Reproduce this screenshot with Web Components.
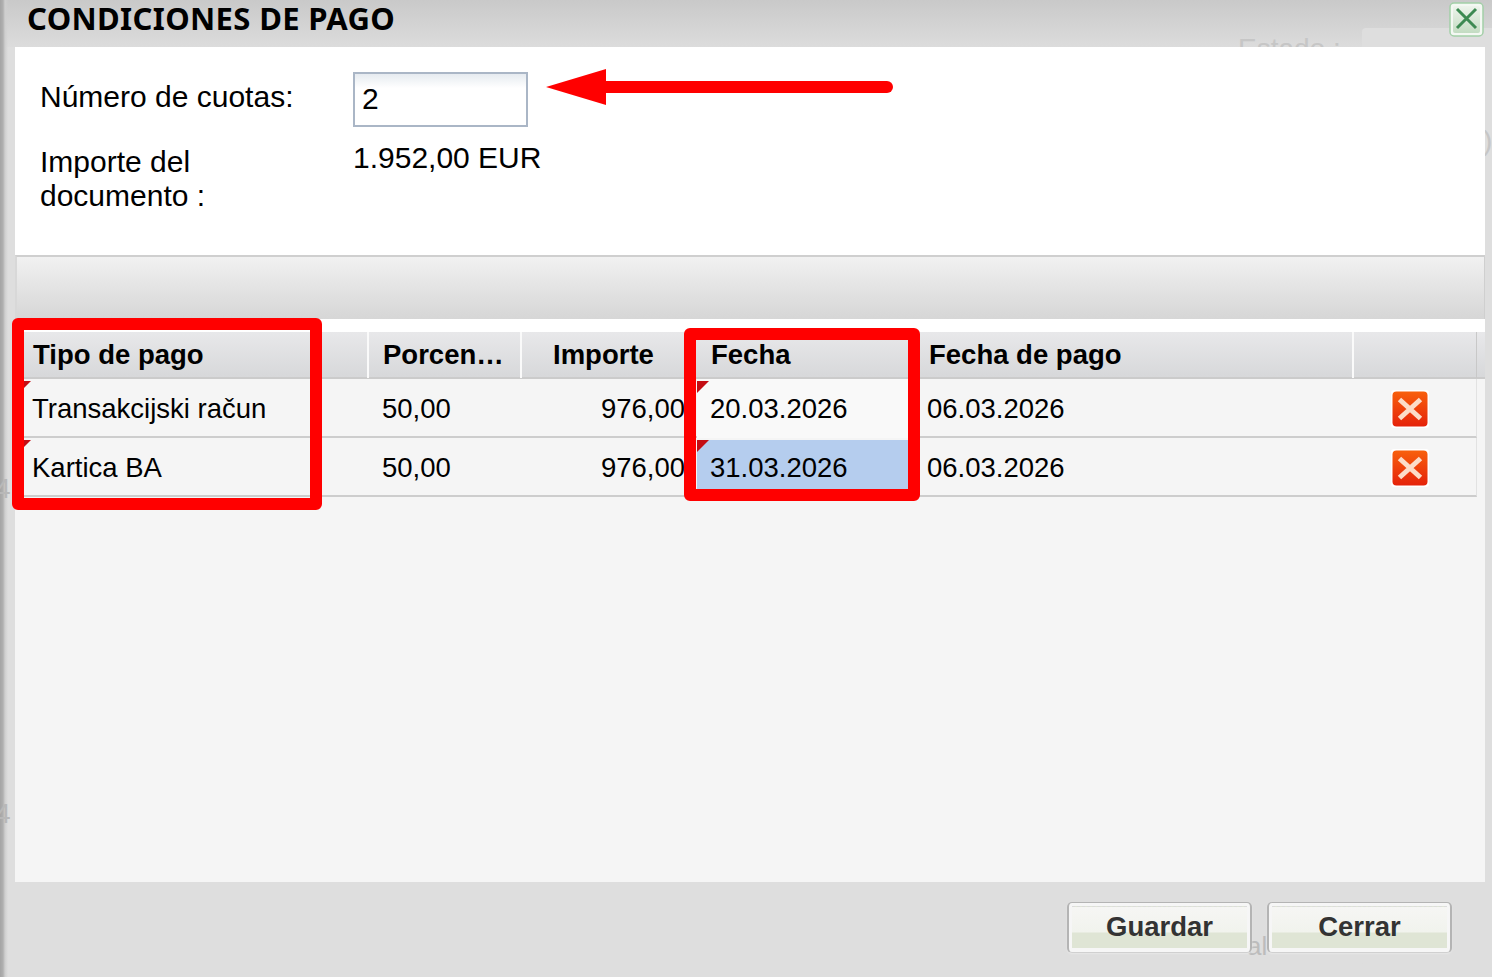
<!DOCTYPE html>
<html lang="es">
<head>
<meta charset="utf-8">
<title>Condiciones de pago</title>
<style>
  html, body { margin: 0; padding: 0; height: 100%; overflow: hidden; background: #ddd; }
</style>
</head>
<body>
<pay-dialog heading="CONDICIONES DE PAGO">
  <terms-form quotas="2" total="1.952,00 EUR"></terms-form>
  <grid-toolbar></grid-toolbar>
  <pay-grid></pay-grid>
  <dialog-button slot="actions">Guardar</dialog-button>
  <dialog-button slot="actions">Cerrar</dialog-button>
</pay-dialog>

<script>
class PayDialog extends HTMLElement {
    connectedCallback() {
        const shadow = this.attachShadow({mode: "open"});
        shadow.innerHTML = `
            <style>
                :host {
                    position: relative;
                    display: grid;
                    grid-template-rows: 47px 835px 95px;
                    width: 1492px;
                    height: 977px;
                    overflow: hidden;
                    background: #dedede;
                    font-family: "Liberation Sans", Arial, sans-serif;
                    color: #000;
                }
                .strip {
                    position: absolute;
                    left: 0; top: 0; bottom: 0;
                    width: 8px;
                    z-index: 1;
                    background: linear-gradient(90deg, #a4a4a4 0, #b0b0b0 3px, #cfcfcf 5px, rgba(220,220,220,0) 8px);
                }
                .title {
                    position: relative;
                    display: flex;
                    align-items: flex-start;
                    justify-content: space-between;
                    padding: 0 8px 0 27px;
                    background: linear-gradient(#c9c9c9, #dcdcdc);
                }
                h1 {
                    position: relative;
                    margin: 0;
                    font: 700 31px/37px "Noto Sans", sans-serif;
                    letter-spacing: .35px;
                    white-space: nowrap;
                }
                .close {
                    position: relative;
                    width: 35px;
                    height: 35px;
                    margin-top: 2px;
                }
                .ghost {
                    position: absolute;
                    font-size: 28px;
                    color: #c6c6c6;
                    white-space: nowrap;
                }
                .shade {
                    position: absolute;
                    background: #dedede;
                    border-radius: 4px 0 0 0;
                }
                .panel {
                    position: relative;
                    display: flex;
                    flex-direction: column;
                    margin: 0 7px 0 15px;
                    background: #f5f5f5;
                }
                .footer {
                    position: relative;
                    display: flex;
                    justify-content: flex-end;
                    align-items: flex-start;
                    gap: 15px;
                    padding: 20px 40px 0 0;
                }
            </style>
            <div class="strip"></div>
            <span class="ghost" style="left:1483px;top:125px">)</span>
            <span class="ghost" style="left:-5px;top:473px;z-index:2;color:#b8b8b8">4</span>
            <span class="ghost" style="left:-5px;top:798px;z-index:2;color:#b8b8b8">4</span>
            <div class="title">
                <div class="shade" style="left:1362px;top:28px;right:0;bottom:0"></div>
                <span class="ghost" style="left:1238px;top:33px">Estado :</span>
                <h1>${this.getAttribute("heading")}</h1>
                <svg class="close" viewBox="0 0 35 35">
                    <defs>
                        <linearGradient id="closeFill" x1="0" y1="0" x2="0" y2="1">
                            <stop offset="0" stop-color="#eef4ec"/>
                            <stop offset="1" stop-color="#c3dcc2"/>
                        </linearGradient>
                    </defs>
                    <rect x="1" y="1" width="33" height="33" rx="4" fill="#f4f8f3" stroke="#a3cfa8" stroke-width="1.5"/>
                    <rect x="4" y="4" width="27" height="27" rx="2" fill="url(#closeFill)"/>
                    <path d="M8 7 L27 26 M27 7 L8 26" stroke="#3d8a52" stroke-width="3" fill="none"/>
                </svg>
            </div>
            <div class="panel"><slot></slot></div>
            <div class="footer">
                <div class="shade" style="left:1362px;top:78px;right:0;bottom:0"></div>
                <span class="ghost" style="left:1247px;top:49px;font-size:26px;color:#bcbcbc">al</span>
                <slot name="actions"></slot>
            </div>
        `;
    }
}

class TermsForm extends HTMLElement {
    connectedCallback() {
        const shadow = this.attachShadow({mode: "open"});
        shadow.innerHTML = `
            <style>
                :host {
                    position: relative;
                    display: grid;
                    grid-template-columns: 313px 1fr;
                    grid-template-rows: 80px 128px;
                    height: 208px;
                    padding-left: 25px;
                    box-sizing: border-box;
                    background: #fff;
                    font-size: 30px;
                    line-height: 34px;
                }
                .label-a { padding-top: 33px; }
                .label-b { padding-top: 18px; }
                .label-b span { display: block; width: 200px; }
                .value { padding-top: 14px; }
                .quota {
                    box-sizing: border-box;
                    width: 175px;
                    height: 55px;
                    margin-top: 25px;
                    padding: 8px 0 0 7px;
                    border: 2px solid #aab6c6;
                    background: linear-gradient(#e6ebf0, #fff 14px);
                }
                svg { position: absolute; left: 530px; top: 20px; }
            </style>
            <div class="label-a">Número de cuotas:</div>
            <div><div class="quota">${this.getAttribute("quotas")}</div></div>
            <div class="label-b"><span>Importe del documento :</span></div>
            <div class="value">${this.getAttribute("total")}</div>
            <svg width="350" height="40" viewBox="0 0 350 40">
                <path d="M61 20 H342" stroke="#ff0000" stroke-width="12" stroke-linecap="round"/>
                <path d="M1 20 L61 2 V38 Z" fill="#ff0000"/>
            </svg>
        `;
    }
}

class GridToolbar extends HTMLElement {
    connectedCallback() {
        const shadow = this.attachShadow({mode: "open"});
        shadow.innerHTML = `
            <style>
                :host {
                    display: block;
                    box-sizing: border-box;
                    height: 64px;
                    border-top: 2px solid #cfcfcf;
                    border-left: 2px solid #d8d8d8;
                    border-right: 1px solid #cfcfcf;
                    background: linear-gradient(#f1f1f1, #d6d6d6);
                }
                .strip { height: 62px; }
            </style>
            <div class="strip"></div>
        `;
    }
}

const COLUMNS = "354px 153px 175px 218px 439px 123px";

class PayGrid extends HTMLElement {
    connectedCallback() {
        const shadow = this.attachShadow({mode: "open"});
        const rows = [
            ["Transakcijski račun", "50,00", "976,00", "20.03.2026", "06.03.2026", false],
            ["Kartica BA", "50,00", "976,00", "31.03.2026", "06.03.2026", true]
        ];
        const mark = `<svg class="mark" width="12" height="12" viewBox="0 0 12 12"><path d="M0 0H12L0 12Z" fill="#c40d14"/></svg>`;
        const del = `
            <svg width="38" height="38" viewBox="0 0 38 38">
                <defs>
                    <linearGradient id="delFill" x1="0" y1="0" x2="0" y2="1">
                        <stop offset="0" stop-color="#f8600c"/>
                        <stop offset="1" stop-color="#e5220a"/>
                    </linearGradient>
                </defs>
                <rect x="0" y="0" width="38" height="38" rx="3" fill="#fff"/>
                <rect x="1.5" y="1.5" width="35" height="35" rx="4" fill="url(#delFill)"/>
                <path d="M8.5 9.5 L29.5 28.5 M29.5 9.5 L8.5 28.5" stroke="#fcdcc8" stroke-width="5" fill="none"/>
            </svg>`;
        shadow.innerHTML = `
            <style>
                :host {
                    position: relative;
                    display: block;
                    padding-top: 13px;
                    background: linear-gradient(#fff 13px, #f5f5f5 13px);
                    font-size: 27.5px;
                }
                .row {
                    display: grid;
                    grid-template-columns: ${COLUMNS};
                    width: 1462px;
                }
                .head {
                    box-sizing: border-box;
                    width: 1470px;
                    grid-template-columns: ${COLUMNS} 8px;
                    height: 47px;
                    border-bottom: 2px solid #cbcbcb;
                    background: linear-gradient(#e8e8ea, #d7d8da);
                    font-weight: 700;
                    line-height: 46px;
                }
                .head > div { border-right: 2px solid #fafafa; box-sizing: border-box; }
                .head > div:nth-child(3), .head > div:nth-child(4), .head > div:last-child { border-right: 0; }
                .head > div:nth-child(6) { border-right: 1px solid #c8c8c8; }
                .head .t1 { padding-left: 18px; }
                .head .t2 { padding-left: 14px; overflow: hidden; white-space: nowrap; }
                .head .t3 { padding-left: 31px; }
                .head .t4 { padding-left: 14px; }
                .head .t5 { padding-left: 14px; }
                .body {
                    height: 59px;
                    line-height: 59px;
                    border-bottom: 2px solid #cdcdcd;
                    border-right: 1px solid #e2e2e2;
                    box-sizing: border-box;
                }
                .body > div { position: relative; }
                .b1 { padding-left: 17px; }
                .b2 { padding-left: 13px; }
                .b3 { text-align: right; padding-right: 12px; }
                .b4 { padding-left: 13px; background: #f9f9f9; width: 213px; box-sizing: border-box; }
                .b4.selected { background: #b5cdee; height: 49px; margin-top: 2px; line-height: 55px; }
                .b5 { padding-left: 12px; }
                .b6 { padding: 11px 0 0 37px; box-sizing: border-box; }
                .b6 svg { display: block; }
                .mark { position: absolute; left: 0; top: 2px; }
                .selected .mark { top: 0; }
                .b1 .mark { left: 4px; }
                .box {
                    position: absolute;
                    box-sizing: border-box;
                    border: 12px solid #ff0000;
                    border-radius: 6px;
                }
            </style>
            <div class="row head">
                <div class="t1">Tipo de pago</div>
                <div class="t2">Porcen…</div>
                <div class="t3">Importe</div>
                <div class="t4">Fecha</div>
                <div class="t5">Fecha de pago</div>
                <div></div>
                <div></div>
            </div>
            ${rows.map(r => `
                <div class="row body">
                    <div class="b1">${mark}${r[0]}</div>
                    <div class="b2">${r[1]}</div>
                    <div class="b3">${r[2]}</div>
                    <div class="b4${r[5] ? " selected" : ""}">${mark}${r[3]}</div>
                    <div class="b5">${r[4]}</div>
                    <div class="b6">${del}</div>
                </div>
            `).join("")}
            <div class="box" style="left:-3px;top:-1px;width:310px;height:192px"></div>
            <div class="box" style="left:669px;top:9px;width:236px;height:173px"></div>
        `;
    }
}

class DialogButton extends HTMLElement {
    connectedCallback() {
        const shadow = this.attachShadow({mode: "open"});
        shadow.innerHTML = `
            <style>
                :host {
                    position: relative;
                    display: block;
                    box-sizing: border-box;
                    width: 185px;
                    height: 51px;
                    border: 1px solid #b4b4b4;
                    border-left-width: 2px;
                    border-right-width: 2px;
                    border-bottom-color: #d0d0d0;
                    border-radius: 5px;
                    padding: 3px 3px 4px;
                    background: #f6f6f6;
                    box-shadow: 0 1px 2px #e8e8e8;
                }
                .face {
                    height: 42px;
                    text-align: center;
                    font: 700 27.5px/40px "Liberation Sans", Arial, sans-serif;
                    color: #333;
                    border-top: 1px dashed #dcdcdc;
                    box-sizing: border-box;
                    background: linear-gradient(#f6f6f4 0, #f1f3ed 25px, #dfe5d5 26px, #dfe5d5 100%);
                }
            </style>
            <div class="face"><slot></slot></div>
        `;
    }
}

customElements.define("pay-dialog", PayDialog);
customElements.define("terms-form", TermsForm);
customElements.define("grid-toolbar", GridToolbar);
customElements.define("pay-grid", PayGrid);
customElements.define("dialog-button", DialogButton);
</script>
</body>
</html>
